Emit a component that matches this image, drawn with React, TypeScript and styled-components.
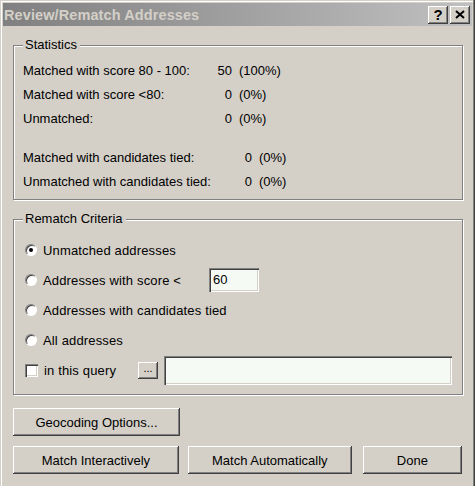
import React from "react";
import styled, { createGlobalStyle, css } from "styled-components";

const Global = createGlobalStyle`
  html, body { margin: 0; padding: 0; background: #d4d0c8; }
  body { font-family: "Liberation Sans", Arial, sans-serif; font-size: 13px; color: #000; }
`;

const raised = css`
  box-shadow: inset -1px -1px 0 #404040, inset 1px 1px 0 #ffffff,
    inset -2px -2px 0 #808080, inset 2px 2px 0 #d4d0c8;
`;

const sunken = css`
  box-shadow: inset 1px 1px 0 #808080, inset 2px 2px 0 #404040,
    inset -1px -1px 0 #ffffff, inset -2px -2px 0 #d4d0c8;
`;

const Window = styled.div`
  width: 475px;
  height: 490px;
  box-sizing: border-box;
  background: #d4d0c8;
  padding: 3px 3px 0 3px;
  box-shadow: inset -1px 0 0 #404040, inset -2px 0 0 #808080,
    inset 1px 1px 0 #d4d0c8, inset 2px 2px 0 #ffffff;
  display: flex;
  flex-direction: column;
  overflow: hidden;
`;

const TitleBar = styled.div`
  height: 23px;
  display: flex;
  align-items: center;
  padding: 0 2px 0 1px;
  background: linear-gradient(to right, #808080, #c0c0c0);
`;

const TitleText = styled.div`
  flex: 1;
  color: #d4d0c8;
  font-weight: bold;
  font-size: 14.5px;
  letter-spacing: 0.1px;
  white-space: nowrap;
`;

const CaptionButton = styled.div<{ $gap?: number }>`
  width: 20px;
  height: 18px;
  margin-left: ${(p) => p.$gap ?? 0}px;
  background: #d4d0c8;
  ${raised};
  display: flex;
  align-items: center;
  justify-content: center;
  font-weight: bold;
  font-size: 15px;
  color: #000;
`;

const Body = styled.div`
  display: flex;
  flex-direction: column;
  padding: 19px 10px 0 10px;
`;

const GroupBox = styled.div<{ $top?: number; $padTop: number; $padBottom: number; $padLeft: number }>`
  position: relative;
  margin-top: ${(p) => p.$top ?? 0}px;
  width: 450px;
  box-sizing: border-box;
  border: 1px solid #808080;
  box-shadow: 1px 1px 0 #ffffff, inset 1px 1px 0 #ffffff;
  padding: ${(p) => p.$padTop}px 10px ${(p) => p.$padBottom}px ${(p) => p.$padLeft}px;
  display: flex;
  flex-direction: column;
`;

const Legend = styled.div`
  position: absolute;
  top: -9px;
  left: 9px;
  padding: 0 3px 0 2px;
  background: #d4d0c8;
  line-height: 16px;
`;

const StatRow = styled.div<{ $labelWidth: number }>`
  display: grid;
  grid-template-columns: ${(p) => p.$labelWidth}px 20px auto;
  column-gap: 7px;
  height: 24px;
  line-height: 24px;
  white-space: nowrap;
`;

const StatValue = styled.span`
  text-align: right;
`;

const Spacer = styled.div<{ $h: number }>`
  height: ${(p) => p.$h}px;
`;

const OptionRow = styled.div`
  display: flex;
  align-items: center;
  height: 30px;
`;

const Radio = styled.span<{ $checked?: boolean }>`
  position: relative;
  width: 12px;
  height: 12px;
  box-sizing: border-box;
  border-radius: 50%;
  background: #ffffff;
  border: 1px solid;
  border-color: #808080 #ffffff #ffffff #808080;
  box-shadow: inset 1px 1px 0 #404040, 0 0 0 0.5px #d4d0c8;
  flex: none;
  &::after {
    content: "";
    display: ${(p) => (p.$checked ? "block" : "none")};
    position: absolute;
    left: 3px;
    top: 3px;
    width: 4px;
    height: 4px;
    border-radius: 50%;
    background: #000;
  }
`;

const CheckBox = styled.span`
  width: 13px;
  height: 13px;
  box-sizing: border-box;
  background: #ffffff;
  ${sunken};
  flex: none;
`;

const OptionLabel = styled.span<{ $width?: number }>`
  margin-left: 6px;
  white-space: nowrap;
  letter-spacing: 0.15px;
  ${(p) => (p.$width ? `width: ${p.$width}px; flex: none;` : "")}
`;

const TextField = styled.div<{ $width?: number; $height: number; $grow?: boolean }>`
  height: ${(p) => p.$height}px;
  ${(p) => (p.$width ? `width: ${p.$width}px;` : "")}
  ${(p) => (p.$grow ? "flex: 1;" : "")}
  box-sizing: border-box;
  background: #f6faf4;
  ${sunken};
  padding: 3px 4px;
  line-height: 17px;
`;

const SmallButton = styled.div`
  width: 20px;
  height: 17px;
  background: #d4d0c8;
  ${raised};
  font-size: 11px;
  line-height: 13px;
  text-align: center;
  margin-right: 6px;
  flex: none;
`;

const Button = styled.div<{ $width: number; $gap?: number }>`
  width: ${(p) => p.$width}px;
  height: 28px;
  margin-left: ${(p) => p.$gap ?? 0}px;
  background: #d4d0c8;
  ${raised};
  display: flex;
  align-items: center;
  justify-content: center;
  white-space: nowrap;
`;

const ButtonRow = styled.div<{ $top: number }>`
  display: flex;
  margin-top: ${(p) => p.$top}px;
`;

const stats1 = [
  { label: "Matched with score 80 - 100:", value: "50", pct: "(100%)" },
  { label: "Matched with score <80:", value: "0", pct: "(0%)" },
  { label: "Unmatched:", value: "0", pct: "(0%)" },
];
const stats2 = [
  { label: "Matched with candidates tied:", value: "0", pct: "(0%)" },
  { label: "Unmatched with candidates tied:", value: "0", pct: "(0%)" },
];

export default function App() {
  return (
    <>
      <Global />
      <Window>
        <TitleBar>
          <TitleText>Review/Rematch Addresses</TitleText>
          <CaptionButton>?</CaptionButton>
          <CaptionButton $gap={2}>
            <svg width="10" height="9" viewBox="0 0 10 9">
              <path d="M1 1 L9 8 M9 1 L1 8" stroke="#000" strokeWidth="2" />
            </svg>
          </CaptionButton>
        </TitleBar>
        <Body>
          <GroupBox $padTop={13} $padBottom={5} $padLeft={9}>
            <Legend>Statistics</Legend>
            {stats1.map((s) => (
              <StatRow key={s.label} $labelWidth={182}>
                <span>{s.label}</span>
                <StatValue>{s.value}</StatValue>
                <span>{s.pct}</span>
              </StatRow>
            ))}
            <Spacer $h={15} />
            {stats2.map((s) => (
              <StatRow key={s.label} $labelWidth={202}>
                <span>{s.label}</span>
                <StatValue>{s.value}</StatValue>
                <span>{s.pct}</span>
              </StatRow>
            ))}
          </GroupBox>
          <GroupBox $top={19} $padTop={15} $padBottom={9} $padLeft={11}>
            <Legend>Rematch Criteria</Legend>
            <OptionRow>
              <Radio $checked />
              <OptionLabel>Unmatched addresses</OptionLabel>
            </OptionRow>
            <OptionRow>
              <Radio />
              <OptionLabel $width={166}>Addresses with score &lt;</OptionLabel>
              <TextField $width={50} $height={24}>60</TextField>
            </OptionRow>
            <OptionRow>
              <Radio />
              <OptionLabel>Addresses with candidates tied</OptionLabel>
            </OptionRow>
            <OptionRow>
              <Radio />
              <OptionLabel>All addresses</OptionLabel>
            </OptionRow>
            <OptionRow>
              <CheckBox />
              <OptionLabel $width={94}>in this query</OptionLabel>
              <SmallButton>...</SmallButton>
              <TextField $grow $height={29} />
            </OptionRow>
          </GroupBox>
          <ButtonRow $top={13}>
            <Button $width={167}>Geocoding Options...</Button>
          </ButtonRow>
          <ButtonRow $top={10}>
            <Button $width={167}>Match Interactively</Button>
            <Button $width={165} $gap={9}>Match Automatically</Button>
            <Button $width={100} $gap={11}>Done</Button>
          </ButtonRow>
        </Body>
      </Window>
    </>
  );
}
